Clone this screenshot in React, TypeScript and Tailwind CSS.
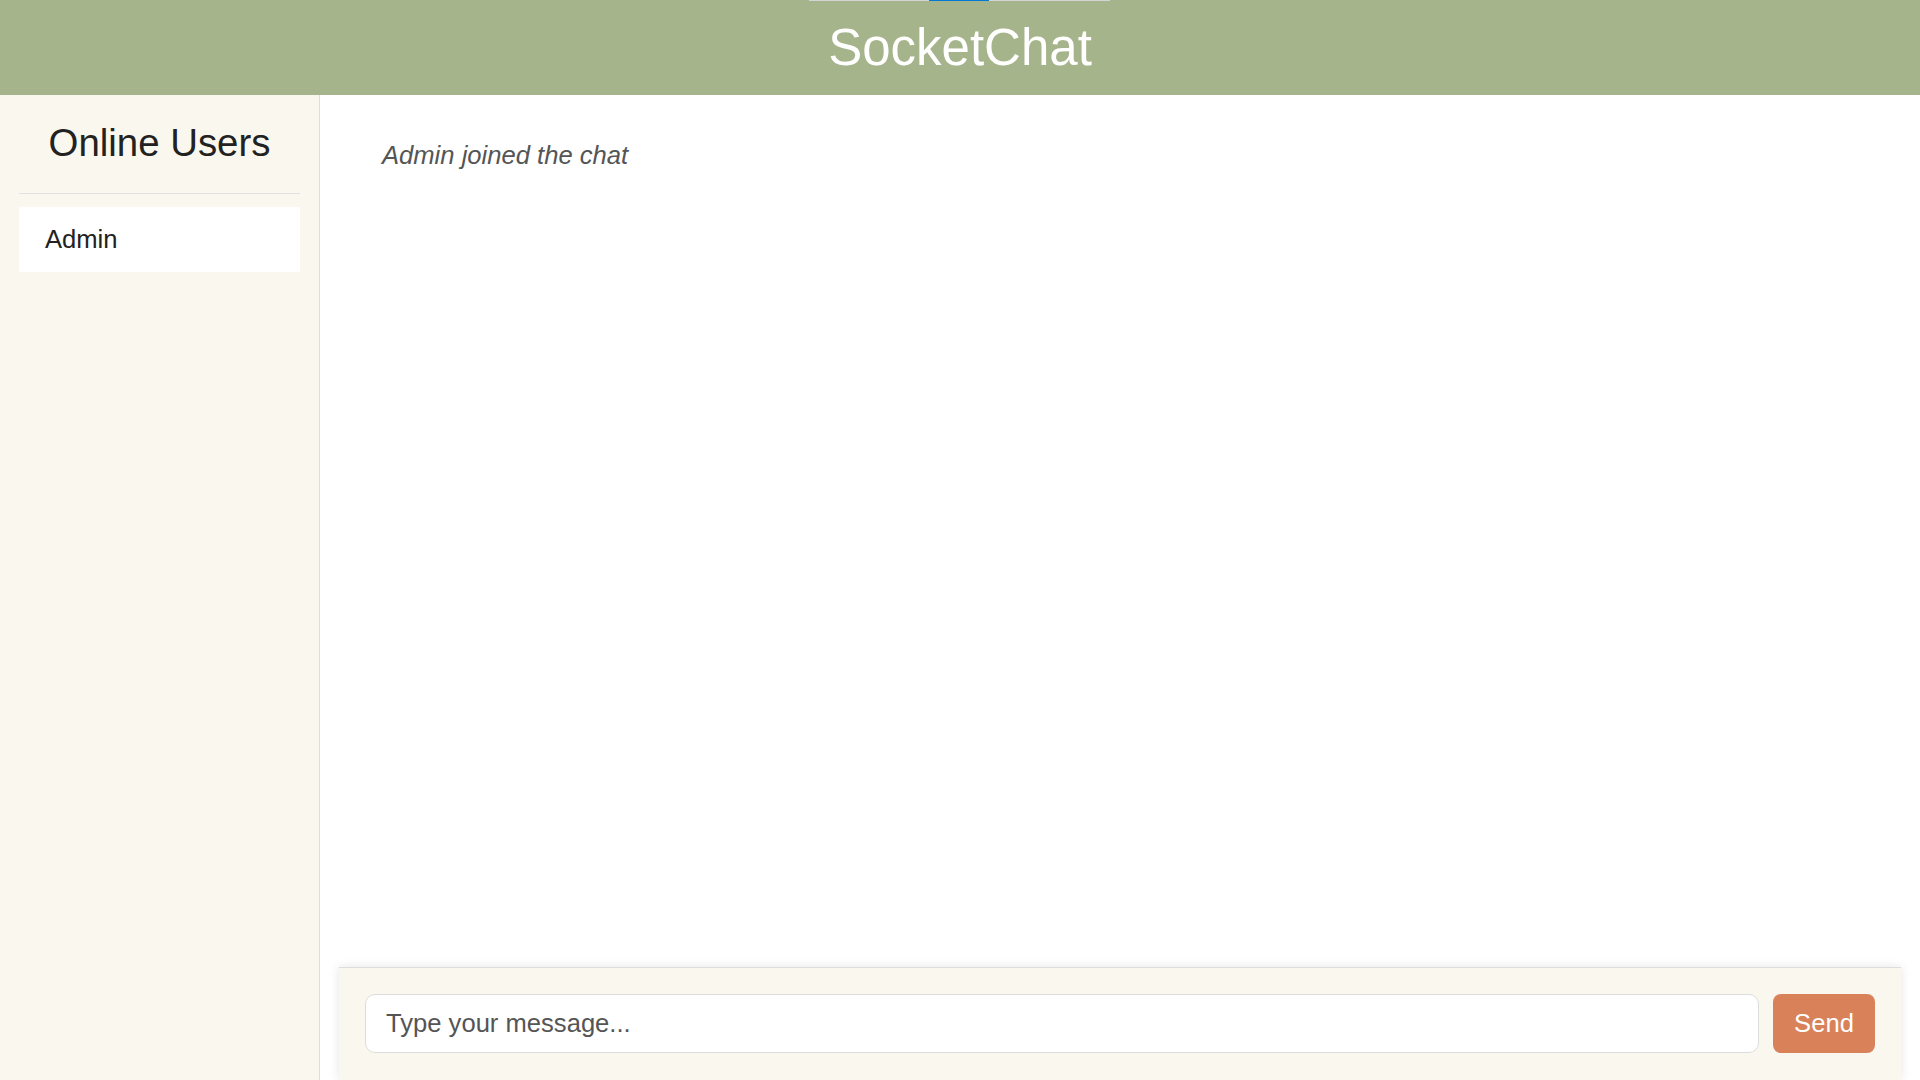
import React from "react";

export default function App() {
  return (
    <div
      className="relative flex h-screen w-full flex-col overflow-hidden bg-white"
      style={{ fontFamily: '"Liberation Sans", Arial, sans-serif' }}
    >
      <div className="absolute left-[809px] top-0 z-10 flex h-px w-[301px] bg-[#d4d4d4]">
        <div className="ml-[120px] h-px w-[60px] bg-[#0078d4]" />
      </div>
      <header className="flex h-[95px] shrink-0 items-center justify-center bg-[#a5b48a]">
        <h1 className="text-[51px] font-normal leading-[normal] text-white">SocketChat</h1>
      </header>
      <div className="flex min-h-0 flex-1">
        <aside className="flex w-[320px] shrink-0 flex-col border-r border-[#dddddd] bg-[#faf8ee] px-[19px] pt-[26px]">
          <h2 className="pb-[28px] text-center text-[38.4px] font-normal leading-[normal] text-[#222222]">
            Online Users
          </h2>
          <div className="h-px w-full bg-[#e0e0e0]" />
          <ul className="mt-[13px]">
            <li className="bg-white py-[18px] pl-[26px] text-[25.6px] leading-[normal] text-[#222222]">Admin</li>
          </ul>
        </aside>
        <main className="flex min-w-0 flex-1 flex-col">
          <div className="flex-1 pl-[62px] pt-[46px]">
            <p className="text-[25.6px] italic leading-[normal] text-[#555555]">Admin joined the chat</p>
          </div>
          <div className="mx-[19px] flex items-center gap-[14px] border-t border-[#dddddd] bg-[#faf8ee] px-[26px] pb-[27px] pt-[26px] shadow-[0_0_10px_rgba(0,0,0,0.1)]">
            <input
              type="text"
              placeholder="Type your message..."
              className="h-[59px] min-w-0 flex-1 rounded-[10px] border border-[#dddddd] bg-white px-[20px] text-[25.6px] text-[#333333] outline-none placeholder:text-[#555555]"
              style={{ fontFamily: '"Liberation Sans", Arial, sans-serif' }}
            />
            <button
              className="h-[59px] w-[102px] rounded-lg bg-[#d9825a] text-[25.6px] text-white"
              style={{ fontFamily: '"Liberation Sans", Arial, sans-serif' }}
            >
              Send
            </button>
          </div>
        </main>
      </div>
    </div>
  );
}
